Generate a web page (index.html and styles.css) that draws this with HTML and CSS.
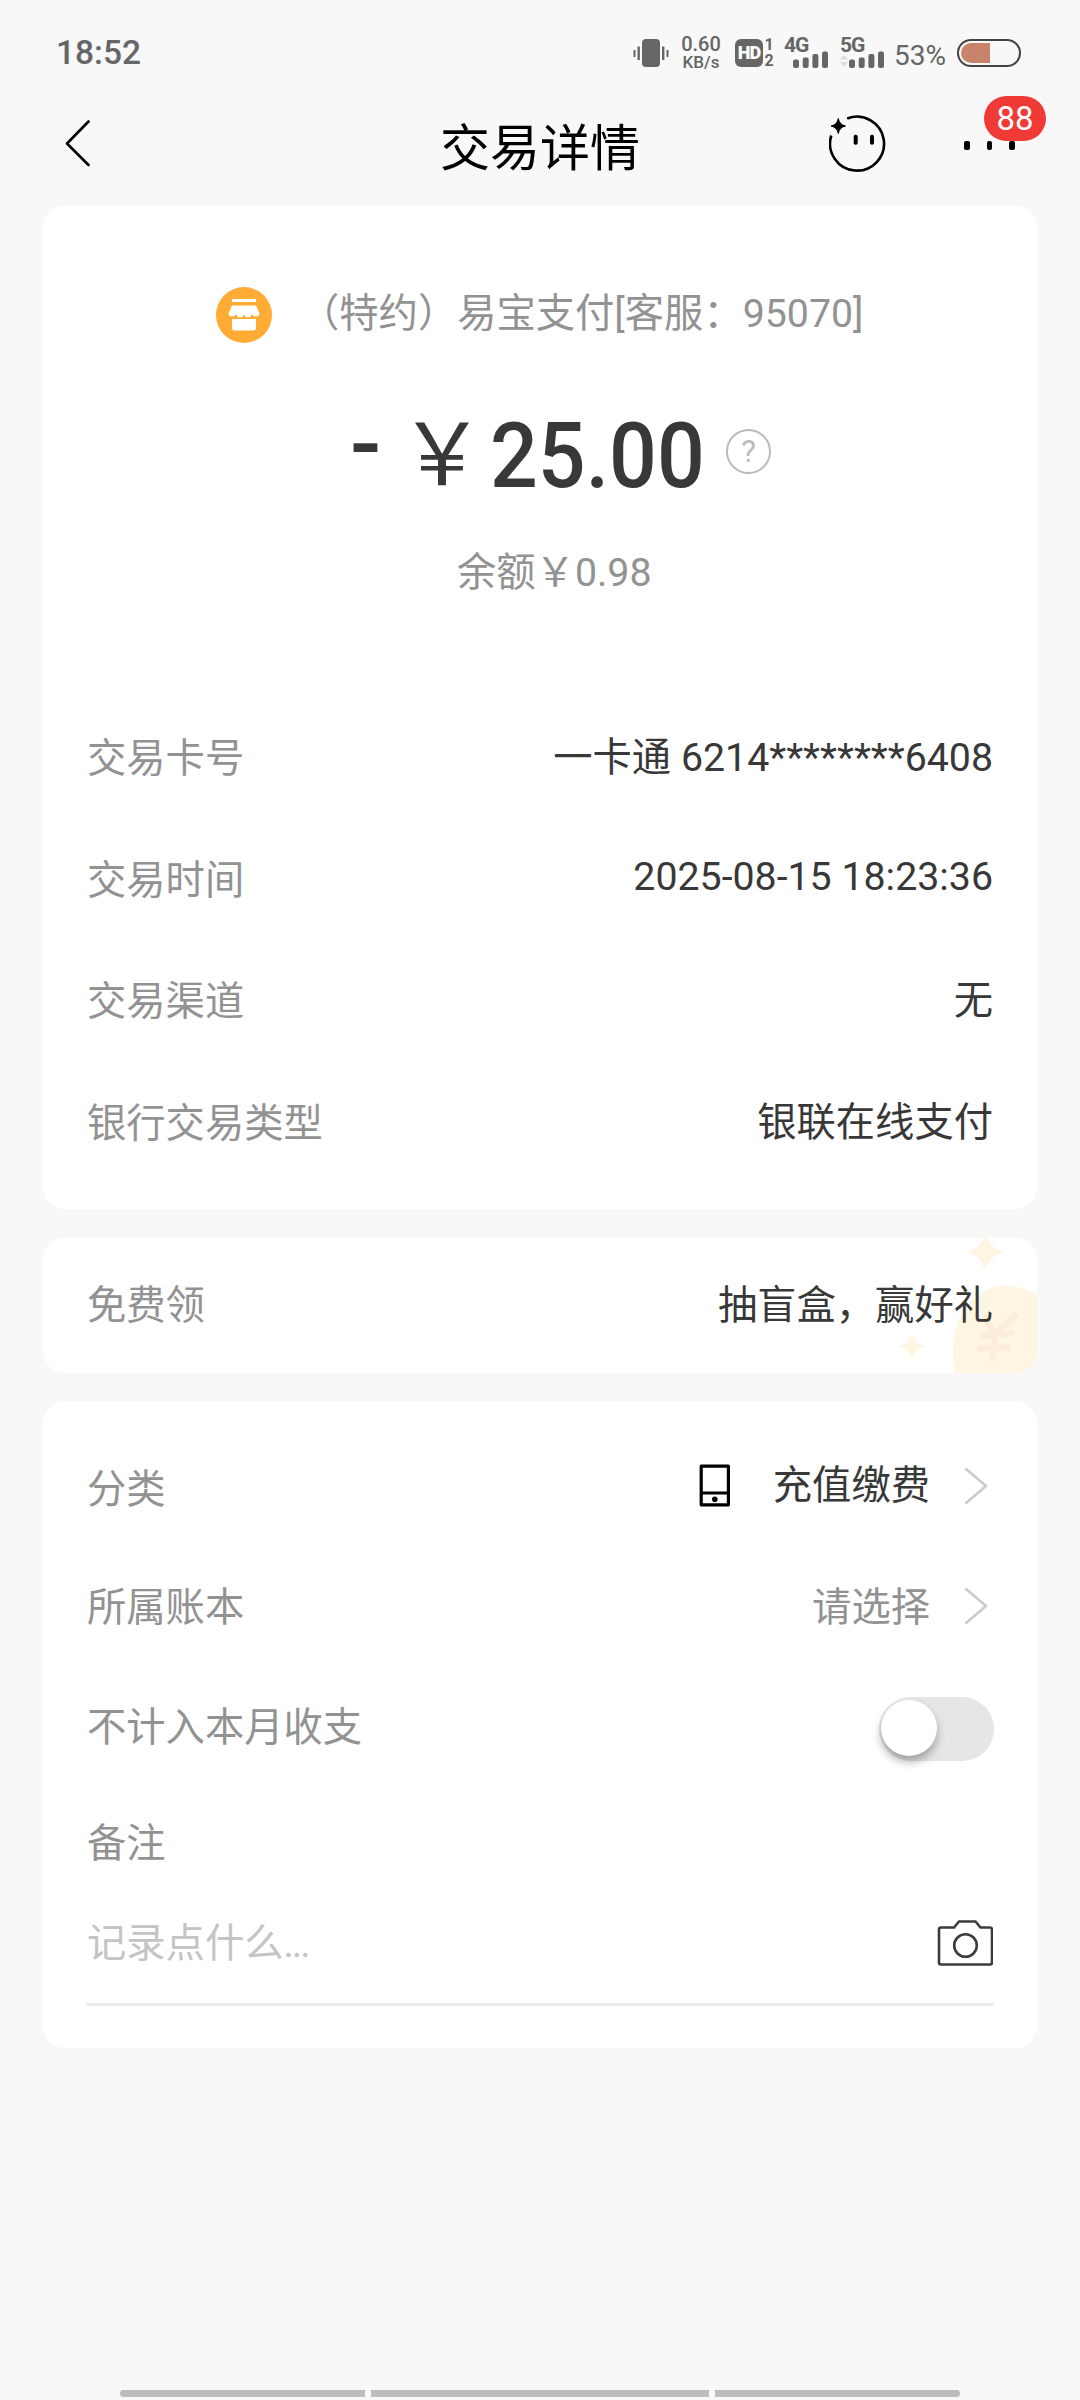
FILE: index.html
```
<!DOCTYPE html>
<html lang="zh">
<head>
<meta charset="UTF-8">
<meta name="viewport" content="width=device-width, initial-scale=1.0">
<title>交易详情</title>
<link rel="stylesheet" href="styles.css">
</head>
<body>
    <!-- 状态栏 -->
    <div class="status">
        <span class="time">18:52</span>
        <div class="status-right">
            <svg class="vibrate" width="36" height="28" viewBox="0 0 36 28">
                <rect x="9" y="0" width="18" height="28" rx="4"/>
                <rect x="4.5" y="7.5" width="2.4" height="13.5"/>
                <rect x="0.5" y="11" width="2" height="7"/>
                <rect x="29" y="7.5" width="2.4" height="13.5"/>
                <rect x="33.5" y="11" width="2" height="7"/>
            </svg>
            <div class="speed"><b>0.60</b><i>KB/s</i></div>
            <div class="hd"><span>HD</span></div>
            <div class="sim"><span>1</span><span>2</span></div>
            <div class="signal">
                <span>4G</span>
                <svg width="46" height="30" viewBox="0 0 46 30">
                    <rect x="9" y="21.5" width="6" height="8.5" rx="2"/>
                    <rect x="18.7" y="19.5" width="6" height="10.5" rx="2"/>
                    <rect x="28.4" y="16" width="6" height="14" rx="2"/>
                    <rect x="38" y="13.5" width="6" height="16.5" rx="2"/>
                </svg>
            </div>
            <div class="signal signal-5g">
                <span>5G</span>
                <svg width="46" height="30" viewBox="0 0 46 30">
                    <path class="arrow" d="M0 21.5 4 17l4 4.5zM0 24h8l-4 5z"/>
                    <rect x="9" y="21.5" width="6" height="8.5" rx="2"/>
                    <rect x="18.7" y="19.5" width="6" height="10.5" rx="2"/>
                    <rect x="28.4" y="16" width="6" height="14" rx="2"/>
                    <rect x="38" y="13.5" width="6" height="16.5" rx="2"/>
                </svg>
            </div>
            <span class="percent">53%</span>
            <div class="battery"><span></span></div>
        </div>
    </div>

    <!-- 标题栏 -->
    <header class="header">
        <svg class="back" width="26" height="48" viewBox="0 0 26 48">
            <path d="M24.5 2.5 3 24.5l21.5 21.5"/>
        </svg>
        <h1>交易详情</h1>
        <svg class="face" width="58" height="58" viewBox="0 0 58 58">
            <path class="ring" d="M18.2 4.5A27 27 0 1 1 2.3 21.5"/>
            <path d="M9.3 4.5Q10.5 10.8 16.5 12 10.5 13.2 9.3 19.5 8.1 13.2 2.1 12 8.1 10.8 9.3 4.5z" stroke="#000" stroke-linejoin="round"/>
            <rect x="24.7" y="20.7" width="4" height="10" rx="1.8"/>
            <rect x="41" y="20.7" width="4" height="10" rx="1.8"/>
        </svg>
        <div class="more">
            <i></i><i></i><i></i>
            <span class="badge">88</span>
        </div>
    </header>

    <section class="card detail">
        <div class="shop">
            <svg width="56" height="56" viewBox="0 0 56 56">
                <circle cx="28" cy="28" r="28" fill="#ffab34"/>
                <path fill="#fff" d="M16 12h24v3H16zM16 18.5h24l3.5 8q0 3-3.5 3-3 0-4-2.5-1 3.5-4 3.5t-4-3q-1 3-4 3t-4-3.500q-1 2.500-4 2.500-3.500 0-3.500-3zM16 32h24v9q0 2.500-2.500 2.500h-19Q16 43.500 16 41z"/>
            </svg>
            <span>（特约）易宝支付[客服：95070]</span>
        </div>
        <div class="amount">
            <span class="minus">-</span>
            <span class="yen">￥</span>
            <span class="num">25.00</span>
            <span class="help">?</span>
        </div>
        <p class="balance">余额￥0.98</p>
        <ul class="list">
            <li><label>交易卡号</label><span>一卡通 6214********6408</span></li>
            <li><label>交易时间</label><span class="date">2025-08-15 18:23:36</span></li>
            <li><label>交易渠道</label><span>无</span></li>
            <li><label>银行交易类型</label><span>银联在线支付</span></li>
        </ul>
    </section>

    <section class="card prize">
        <svg class="coin" width="140" height="142" viewBox="0 0 140 142">
            <g fill="#fef5e3">
                <path d="M88.3 0q4 14 18 18-14 4-18 18-4-14-18-18 14-4 18-18z"/>
                <path d="M15 99.5q3 10 13 13-10 3-13 13-3-10-13-13 10-3 13-13z"/>
                <path d="M108 52c36 0 60 28 60 58v50H66c-8-14-10-28-10-44 0-34 22-64 52-64z"/>
            </g>
            <path d="M140 86v31q-3 16-20 22h20z" fill="#fef0e3"/>
            <path d="M87 83l11 17 22-20M83 102l34-3M80 115l34-2M98 101l-3 26" fill="none" stroke="#fdebdc" stroke-width="6"/>
        </svg>
        <label>免费领</label>
        <span>抽盲盒，赢好礼</span>
    </section>

    <section class="card book">
        <div class="row category">
            <label>分类</label>
            <svg class="phone" width="32" height="44" viewBox="0 0 32 44">
                <path d="M2.2 2.2h27.2v38.6H2.200zM2.200 29h27.200" fill="none" stroke="#000" stroke-width="3.2" stroke-linejoin="round"/>
                <circle cx="15.8" cy="35.2" r="2.8"/>
            </svg>
            <span>充值缴费</span>
            <svg class="go" width="24" height="38" viewBox="0 0 24 38"><path d="M1.5 1.5 22 19 1.5 36.5"/></svg>
        </div>
        <div class="row account">
            <label>所属账本</label>
            <span class="gray">请选择</span>
            <svg class="go" width="24" height="38" viewBox="0 0 24 38"><path d="M1.5 1.5 22 19 1.5 36.5"/></svg>
        </div>
        <div class="row">
            <label>不计入本月收支</label>
            <div class="switch"><i></i></div>
        </div>
        <div class="row remark"><label>备注</label></div>
        <div class="row input">
            <span>记录点什么<i>...</i></span>
            <svg width="56" height="48" viewBox="0 0 56 48">
                <path d="M4 7.5h13l5-6h16.5l5 6h9.5q2 0 2 2v33q0 2-2 2H4q-2 0-2-2v-33q0-2 2-2z"/>
                <circle cx="28.5" cy="25.5" r="11.3"/>
            </svg>
        </div>
    </section>

    <div class="nav-hint"><i></i><i></i><i></i></div>
</body>
</html>
```
FILE: styles.css
```
* {
    margin: 0;
    padding: 0;
    box-sizing: border-box;
}
body {
    height: 2400px;
    overflow: hidden;
    background: #f8f8f8;
    font: 39.3px/56px Roboto, "Noto Sans CJK SC", sans-serif;
    color: #383838;
    display: flex;
    flex-direction: column;
}
svg {
    display: block;
    flex: none;
}
i {
    font-style: normal;
}

/* 状态栏 */
.status {
    height: 104px;
    padding: 2px 59px 0 56px;
    display: flex;
    justify-content: space-between;
    align-items: center;
    color: #666;
    fill: #666;
}
.time {
    font-size: 33.5px;
    font-weight: 500;
}
.status-right {
    display: flex;
    align-items: center;
    height: 32px;
    line-height: 32px;
}
.speed {
    width: 42px;
    margin: 0 13px 0 11px;
    display: flex;
    flex-direction: column;
    align-items: center;
    font-weight: 500;
}
.speed b {
    font-size: 20px;
    font-weight: 500;
    line-height: 18px;
}
.speed i {
    font-size: 17px;
    line-height: 18px;
}
.hd {
    width: 28px;
    height: 28px;
    border-radius: 6px;
    background: #666;
    color: #fff;
    font-size: 18px;
    font-weight: 900;
    line-height: 28px;
    text-align: center;
    letter-spacing: -1px;
}
.sim {
    width: 12px;
    display: flex;
    flex-direction: column;
    align-items: center;
    font-size: 16px;
    font-weight: 700;
    line-height: 16px;
}
.signal {
    width: 46px;
    height: 30px;
    margin-left: 9px;
    position: relative;
}
.signal-5g {
    margin-left: 10px;
}
.signal span {
    position: absolute;
    left: 0;
    top: -4px;
    font-size: 21px;
    font-weight: 700;
    line-height: 22px;
    letter-spacing: -1px;
}
.arrow {
    fill: #ddd;
}
.percent {
    margin: 6px 11px 0 8px;
    font-size: 28px;
}
.battery {
    width: 64px;
    height: 28px;
    border: 2px solid #444;
    border-radius: 14px;
    padding: 2px;
    display: flex;
}
.battery span {
    width: 29px;
    border-radius: 10px 0 0 10px;
    background: #c8846a;
}

/* 标题栏 */
.header {
    height: 102px;
    padding: 0 64px;
    display: flex;
    position: relative;
}
.back {
    margin-top: 15px;
    fill: none;
    stroke: #000;
    stroke-width: 2.6;
    stroke-linecap: round;
    stroke-linejoin: round;
}
.header h1 {
    margin: 17px 0 0 350px;
    font-size: 50px;
    font-weight: 400;
    color: #000;
}
.face {
    margin: 10px 0 0 189px;
}
.ring {
    fill: none;
    stroke: #000;
    stroke-width: 2.6;
}
.more {
    height: 9px;
    margin: 37px 0 0 77px;
    display: flex;
    gap: 17px;
    position: relative;
}
.more i {
    width: 5.5px;
    border-radius: 2px;
    background: #000;
}
.badge {
    position: absolute;
    left: 20px;
    top: -45px;
    width: 62px;
    height: 45px;
    border-radius: 23px;
    background: #f03a36;
    color: #fff;
    font-size: 33px;
    line-height: 46px;
    text-align: center;
}

.card {
    margin: 0 43px;
    padding: 0 44px;
    border-radius: 22px;
    background: #fff;
}
label {
    color: #929292;
}

/* 交易信息 */
.detail {
    height: 1003px;
}
.shop {
    padding: 81px 0 0 129px;
    display: flex;
    gap: 28px;
    color: #929292;
    white-space: nowrap;
}
.shop span {
    margin-top: -1px;
}
.amount {
    margin-top: 58px;
    padding-left: 263px;
    height: 110px;
    display: flex;
    line-height: 110px;
    white-space: nowrap;
}
.minus {
    width: 49px;
    margin-top: -11px;
    font-size: 92px;
    font-weight: 500;
}
.yen {
    width: 91px;
    font-size: 86px;
}
.num {
    width: 236px;
    font-size: 91px;
    font-weight: 500;
    transform: scaleX(.925);
    transform-origin: left;
}
.help {
    width: 45px;
    height: 45px;
    margin-top: 28px;
    border: 2.5px solid #bbb;
    border-radius: 50%;
    color: #bbb;
    font-size: 31px;
    line-height: 41px;
    text-align: center;
}
.balance {
    margin: 34px 0 0 370px;
    color: #929292;
}
.list {
    margin-top: 98px;
    list-style: none;
}
.list li {
    height: 121.7px;
    padding-top: 32px;
    display: flex;
    justify-content: space-between;
}
.list span {
    margin-top: -1px;
}
.list .date {
    margin-top: -4px;
}

/* 盲盒 */
.prize {
    height: 135px;
    margin-top: 29px;
    padding-top: 1px;
    display: flex;
    justify-content: space-between;
    align-items: center;
    position: relative;
}
.coin {
    position: absolute;
    right: 0;
    bottom: -3px;
    clip-path: inset(0 0 3px 0 round 0 0 22px 0);
}
.prize span {
    position: relative;
}

/* 记账 */
.book {
    height: 647px;
    margin-top: 28px;
    padding-top: 29px;
}
.row {
    height: 119px;
    display: flex;
    align-items: center;
}
.row label {
    flex: 1;
}
.category span,
.category svg {
    margin-top: -8px;
}
.account {
    padding-bottom: 2px;
}
.account svg {
    margin-top: -3px;
}
.phone {
    margin-right: 42px;
}
.gray {
    color: #929292;
}
.go {
    margin: 0 5px 0 34px;
    fill: none;
    stroke: #ccc;
    stroke-width: 2.6;
}
.switch {
    width: 115px;
    height: 64px;
    margin: 3px -1px 0 0;
    padding: 3px 2px;
    border-radius: 32px;
    background: #e6e6e6;
}
.switch i {
    display: block;
    width: 56px;
    height: 56px;
    border-radius: 50%;
    background: #fff;
    box-shadow: 0 6px 10px rgba(0, 0, 0, .3);
}
.remark {
    height: 114px;
}
.input {
    height: 105px;
    margin: 0 -1px;
    padding: 0 1px 16px;
    justify-content: space-between;
    border-bottom: 3px solid #ebebeb;
    color: #c4c4c4;
}
.input i {
    letter-spacing: -2px;
}
.input svg {
    fill: none;
    stroke: #3c3c3c;
    stroke-width: 2.6;
}

.nav-hint {
    height: 7px;
    margin: auto 120px 3px;
    display: flex;
    gap: 6px;
}
.nav-hint i {
    flex: 245;
    background: #bcbcbc;
}
.nav-hint i:nth-child(2) {
    flex: 338;
}
.nav-hint i:first-child {
    border-radius: 4px 0 0 4px;
}
.nav-hint i:last-child {
    border-radius: 0 4px 4px 0;
}
```
